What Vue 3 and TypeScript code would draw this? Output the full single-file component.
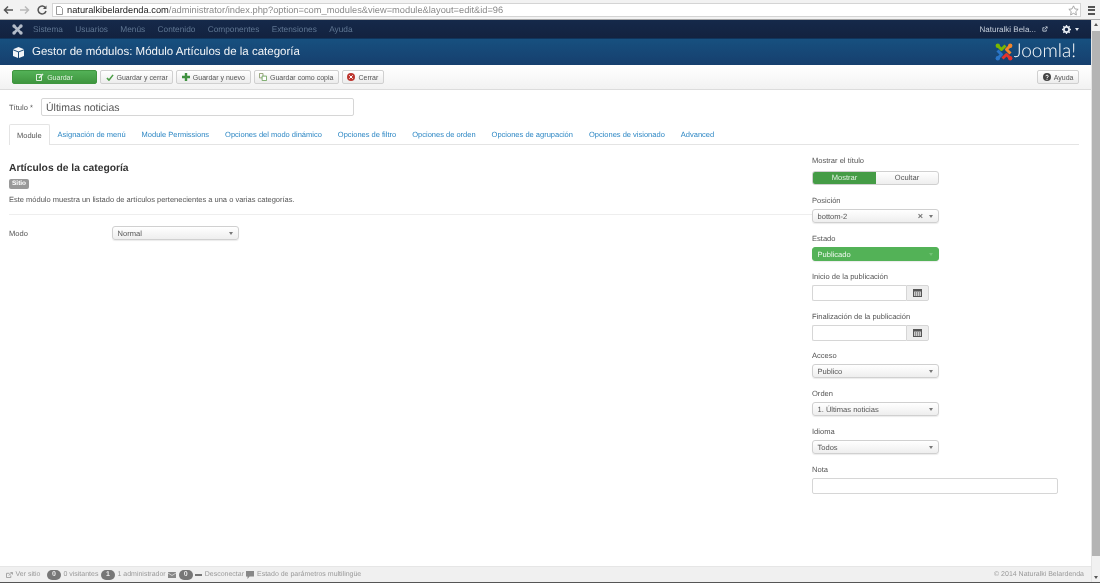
<script setup lang="ts">
const navItems = ['Sistema', 'Usuarios', 'Menús', 'Contenido', 'Componentes', 'Extensiones', 'Ayuda']
const tabs = [
  'Module',
  'Asignación de menú',
  'Module Permissions',
  'Opciones del modo dinámico',
  'Opciones de filtro',
  'Opciones de orden',
  'Opciones de agrupación',
  'Opciones de visionado',
  'Advanced',
]
</script>

<template>
  <div class="window">
    <div class="chrome">
      <svg width="10" height="10" viewBox="0 0 10 10"><path d="M10 5H2M5 1.500 1.500 5 5 8.500" fill="none" stroke="#555" stroke-width="1.500" /></svg>
      <svg width="10" height="10" viewBox="0 0 10 10"><path d="M0 5h8M5 1.500 8.500 5 5 8.500" fill="none" stroke="#b9b9b9" stroke-width="1.500" /></svg>
      <svg width="10" height="10" viewBox="0 0 10 10"><path d="M8.500 2.800A4 4 0 1 0 9 6" fill="none" stroke="#555" stroke-width="1.500" /><path d="M9.500.5v3.600H5.900z" fill="#555" /></svg>
      <div class="omnibox">
        <svg width="7" height="9" viewBox="0 0 7 9"><path d="M.5.5h4l2 2v6h-6z" fill="#fff" stroke="#999" /></svg>
        <span class="url"><b>naturalkibelardenda.com</b>/administrator/index.php?option=com_modules&amp;view=module&amp;layout=edit&amp;id=96</span>
        <svg class="star" width="11" height="11" viewBox="0 0 13 13"><path d="m6.500 1 1.700 3.600 3.800.5-2.800 2.700.7 3.900-3.400-1.900-3.400 1.900.7-3.900L1 5.100l3.800-.5z" fill="#fff" stroke="#999" /></svg>
      </div>
      <div class="burger"><i></i><i></i><i></i></div>
    </div>

    <div class="viewport">
      <div class="page">
        <nav class="navbar">
          <svg class="brand" width="11" height="11" viewBox="0 0 11 11"><path d="M2 2 9 9M9 2 2 9" stroke="#b4bcc9" stroke-width="2.600" /><circle cx="2" cy="2" r="1.700" fill="#b4bcc9" /><circle cx="9" cy="2" r="1.700" fill="#b4bcc9" /><circle cx="2" cy="9" r="1.700" fill="#b4bcc9" /><circle cx="9" cy="9" r="1.700" fill="#b4bcc9" /></svg>
          <span v-for="item in navItems" :key="item" class="nav-item">{{ item }}</span>
          <span class="nav-user">Naturalki Bela...
            <svg width="6" height="6" viewBox="0 0 7 7"><path d="M5 4v2H1V2h2M3 4l3-3M4 1h2v2" fill="none" stroke="#c6cfdb" /></svg>
          </span>
          <svg class="gear" width="9" height="9" viewBox="0 0 10 10"><circle cx="5" cy="5" r="2.900" fill="none" stroke="#e6ebf2" stroke-width="2" /><path d="M5 0v2M5 8v2M0 5h2M8 5h2M1.500 1.500l1.400 1.400M7.100 7.100l1.400 1.400M8.500 1.500 7.100 2.900M2.900 7.100 1.500 8.500" stroke="#e6ebf2" stroke-width="1.500" /></svg>
          <i class="caret light"></i>
        </nav>

        <header class="subhead">
          <svg width="11" height="11" viewBox="0 0 11 11"><path d="M5.500 0 11 2.200 5.500 4.400 0 2.200zM0 3.300l5 2v5.700L0 9zM11 3.300l-5 2v5.700l5-2z" fill="#f2f4f7" /></svg>
          <h1>Gestor de módulos: Módulo Artículos de la categoría</h1>
          <div class="joomla">
            <svg width="18" height="18" viewBox="0 0 18 18" fill="none" stroke-width="3" stroke-linejoin="round">
              <path d="M3 3 6.500 6.500 10.500 2.500" stroke="#7ab800" />
              <path d="M15 3 11.500 6.500 15.500 10.500" stroke="#f4862a" />
              <path d="M15 15 11.500 11.500 7.500 15.500" stroke="#e4322b" />
              <path d="M3 15 6.500 11.500 2.500 7.500" stroke="#2a75c7" />
              <circle cx="2.800" cy="2.800" r="2.200" fill="#7ab800" />
              <circle cx="15.200" cy="2.800" r="2.200" fill="#f4862a" />
              <circle cx="15.200" cy="15.200" r="2.200" fill="#e4322b" />
              <circle cx="2.800" cy="15.200" r="2.200" fill="#2a75c7" />
            </svg>
            <span>Joomla!</span>
          </div>
        </header>

        <div class="toolbar">
          <button class="btn primary">
            <svg width="8" height="8" viewBox="0 0 8 8"><path d="M.5 1.500h5v6h-5z" fill="none" stroke="#dff0df" /><path d="M3 5 7 1" stroke="#dff0df" stroke-width="1.500" /></svg>
            Guardar
          </button>
          <button class="btn">
            <svg width="8" height="7" viewBox="0 0 9 8"><path d="M1 4.500 3.300 7 8 1" fill="none" stroke="#4a9d45" stroke-width="1.800" /></svg>
            Guardar y cerrar
          </button>
          <button class="btn">
            <svg width="8" height="8" viewBox="0 0 8 8"><path d="M4 0v8M0 4h8" stroke="#3f9140" stroke-width="2.400" /></svg>
            Guardar y nuevo
          </button>
          <button class="btn">
            <svg width="8" height="8" viewBox="0 0 9 9"><path d="M.5.5h4v5h-4z" fill="none" stroke="#8a9a6a" /><path d="M3.500 3.500h5v5h-5z" fill="#fff" stroke="#6da35d" /></svg>
            Guardar como copia
          </button>
          <button class="btn">
            <svg width="8" height="8" viewBox="0 0 8 8"><circle cx="4" cy="4" r="4" fill="#bd362f" /><path d="m2.300 2.300 3.400 3.400m0-3.400L2.300 5.700" stroke="#fff" /></svg>
            Cerrar
          </button>
          <button class="btn help">
            <svg width="8" height="8" viewBox="0 0 8 8"><circle cx="4" cy="4" r="4" fill="#444" /><path d="M2.800 3.200c0-1.400 2.500-1.400 2.500 0C5.300 4 4 4 4 5" fill="none" stroke="#fff" /><path d="M3.500 5.700h1v1h-1z" fill="#fff" /></svg>
            Ayuda
          </button>
        </div>

        <main class="content">
          <div class="title-row">
            <label>Título *</label>
            <div class="title-input">Últimas noticias</div>
          </div>

          <ul class="tabs">
            <li v-for="(tab, i) in tabs" :key="tab" :class="{ active: i === 0 }">{{ tab }}</li>
          </ul>

          <div class="columns">
            <section class="left">
              <h2>Artículos de la categoría</h2>
              <span class="badge">Sitio</span>
              <p class="desc">Este módulo muestra un listado de artículos pertenecientes a una o varias categorías.</p>
              <hr />
              <div class="mode-row">
                <label>Modo</label>
                <div class="select"><span>Normal</span><i class="caret"></i></div>
              </div>
            </section>

            <aside class="side">
              <label>Mostrar el título</label>
              <div class="toggle"><span class="on">Mostrar</span><span>Ocultar</span></div>

              <label>Posición</label>
              <div class="select"><span>bottom-2</span><em>×</em><i class="caret"></i></div>

              <label>Estado</label>
              <div class="select published"><span>Publicado</span><i class="caret"></i></div>

              <label>Inicio de la publicación</label>
              <div class="date">
                <div class="date-input"></div>
                <div class="date-btn">
                  <svg width="9" height="8" viewBox="0 0 9 8"><path d="M0 0h9v8H0z" fill="#555" /><path d="M1 2.500h7v4.500H1z" fill="#ccc" /><path d="M2 3.500h1v1H2zM4 3.500h1v1H4zM6 3.500h1v1H6zM2 5.500h1v1H2zM4 5.500h1v1H4zM6 5.500h1v1H6z" fill="#555" /></svg>
                </div>
              </div>

              <label>Finalización de la publicación</label>
              <div class="date">
                <div class="date-input"></div>
                <div class="date-btn">
                  <svg width="9" height="8" viewBox="0 0 9 8"><path d="M0 0h9v8H0z" fill="#555" /><path d="M1 2.500h7v4.500H1z" fill="#ccc" /><path d="M2 3.500h1v1H2zM4 3.500h1v1H4zM6 3.500h1v1H6zM2 5.500h1v1H2zM4 5.500h1v1H4zM6 5.500h1v1H6z" fill="#555" /></svg>
                </div>
              </div>

              <label>Acceso</label>
              <div class="select"><span>Publico</span><i class="caret"></i></div>

              <label>Orden</label>
              <div class="select"><span>1. Últimas noticias</span><i class="caret"></i></div>

              <label>Idioma</label>
              <div class="select"><span>Todos</span><i class="caret"></i></div>

              <label>Nota</label>
              <div class="note"></div>
            </aside>
          </div>
        </main>

        <footer class="status">
          <svg width="7" height="6" viewBox="0 0 8 7"><path d="M4 1.500H.5v5h5V4M3 4l4-3M5 .5h2.500V3" fill="none" stroke="#999" /></svg>
          <span class="view-site">Ver sitio</span>
          <b class="count">0</b><span>0 visitantes</span>
          <b class="count">1</b><span>1 administrador</span>
          <svg width="8" height="6" viewBox="0 0 8 6"><path d="M0 0h8v6H0z" fill="#888" /><path d="m0 1 4 2.500L8 1" fill="none" stroke="#eee" stroke-width=".7" /></svg>
          <b class="count">0</b>
          <i class="dash"></i><span>Desconectar</span>
          <svg width="8" height="8" viewBox="0 0 8 8"><path d="M0 0h8v5.500H3.500L1.500 8V5.500H0z" fill="#888" /></svg>
          <span>Estado de parámetros multilingüe</span>
          <span class="copyright">© 2014 Naturalki Belardenda</span>
        </footer>
      </div>

      <div class="scrollbar">
        <i class="arrow up"></i>
        <div class="thumb"></div>
        <i class="arrow down"></i>
      </div>
    </div>
    <div class="edge"></div>
  </div>
</template>

<style>
html,
body {
  margin: 0;
  overflow: hidden;
}
</style>

<style scoped>
.window {
  width: 1100px;
  height: 583px;
  display: flex;
  flex-direction: column;
  font-family: 'Liberation Sans', Arial, sans-serif;
  font-size: 7.550px;
  color: #555;
  background: #fff;
  text-rendering: geometricPrecision;
  filter: blur(0.3px);
}

.chrome {
  height: 20px;
  flex: none;
  display: flex;
  align-items: center;
  padding: 1px 0 0 3px;
  gap: 7px;
  background: #f2f2f2;
  box-sizing: border-box;
  border-bottom: 1px solid #a9a9a9;
}
.chrome > svg {
  flex: none;
}
.omnibox {
  width: 1029px;
  height: 14px;
  margin-left: -2px;
  box-sizing: border-box;
  display: flex;
  align-items: center;
  gap: 4px;
  padding: 0 1px 0 3px;
  background: #fff;
  border: 1px solid #d4d4d4;
}
.url {
  font-size: 9.300px;
  color: #8a8a8a;
  white-space: nowrap;
}
.url b {
  font-weight: 400;
  color: #222;
}
.star {
  margin-left: auto;
}
.burger {
  width: 7px;
  display: flex;
  flex-direction: column;
  gap: 1.500px;
}
.burger i {
  height: 2px;
  background: #555;
}

.viewport {
  flex: 1;
  min-height: 0;
  display: flex;
}
.page {
  flex: 1;
  min-width: 0;
  display: flex;
  flex-direction: column;
}

.navbar {
  height: 18px;
  flex: none;
  display: flex;
  align-items: center;
  padding: 0 12px;
  background: linear-gradient(#15294a, #13223f);
  color: #5f7692;
  box-sizing: border-box;
}
.brand {
  margin-right: 10px;
}
.nav-item {
  font-size: 8.300px;
  margin-right: 12.300px;
}
.nav-user {
  margin-left: auto;
  color: #c6cfdb;
  font-size: 8px;
  display: flex;
  align-items: center;
  gap: 6px;
}
.gear {
  margin-left: 14px;
}
.caret {
  width: 0;
  height: 0;
  border-left: 2.500px solid transparent;
  border-right: 2.500px solid transparent;
  border-top: 3px solid #777;
}
.caret.light {
  margin-left: 4px;
  border-top-color: #dfe5ee;
}

.subhead {
  height: 27px;
  flex: none;
  display: flex;
  align-items: center;
  padding: 0 15px 0 13px;
  gap: 8px;
  background: linear-gradient(#17507f, #163f6e);
  border-top: 1px solid #10345c;
  box-sizing: border-box;
  color: #f2f4f7;
}
.subhead h1 {
  margin: 0;
  font-size: 11.500px;
  font-weight: 400;
}
.joomla {
  margin-left: auto;
  display: flex;
  align-items: center;
  gap: 1px;
}
.joomla span {
  font-family: Lato, sans-serif;
  font-weight: 300;
  font-size: 19px;
  line-height: 20px;
  margin-top: -3px;
  color: #fff;
}

.toolbar {
  height: 25px;
  flex: none;
  display: flex;
  align-items: center;
  gap: 3px;
  padding: 0 12px;
  background: linear-gradient(#fff, #f2f2f2);
  border-bottom: 1px solid #dcdcdc;
  box-sizing: border-box;
}
.btn {
  height: 14px;
  padding: 0 4.500px;
  display: inline-flex;
  align-items: center;
  justify-content: center;
  gap: 3px;
  font: 7px 'Liberation Sans', Arial, sans-serif;
  color: #555;
  background: linear-gradient(#fff, #ececec);
  border: 1px solid #d0d0d0;
  border-radius: 2px;
  box-sizing: border-box;
  white-space: nowrap;
}
.btn.primary {
  width: 85px;
  color: #dff0df;
  background: linear-gradient(#53b157, #3f963f);
  border-color: #3f963f;
}
.btn.help {
  margin-left: auto;
}

.content {
  flex: 1;
  padding: 8px 12px 0 9px;
  min-height: 0;
}
.title-row {
  display: flex;
  align-items: center;
}
.title-row label {
  width: 32px;
  padding-top: 1px;
}
.title-input {
  width: 313px;
  height: 18px;
  box-sizing: border-box;
  padding: 1px 4px 0;
  display: flex;
  align-items: center;
  font-size: 10.500px;
  color: #555;
  border: 1px solid #d6d6d6;
  border-radius: 2px;
}

.tabs {
  list-style: none;
  margin: 8px 0 0;
  padding: 0;
  height: 20px;
  display: flex;
  border-bottom: 1px solid #e4e4e4;
}
.tabs li {
  padding: 1px 8px 0;
  line-height: 20px;
  color: #2d87c4;
  font-size: 7.500px;
  white-space: nowrap;
}
.tabs li.active {
  color: #555;
  padding: 1px 7px 0;
  height: 21px;
  background: #fff;
  border: 1px solid #e4e4e4;
  border-bottom: 0;
  border-radius: 2px 2px 0 0;
  box-sizing: border-box;
}

.columns {
  display: flex;
  padding-top: 11px;
}
.left {
  width: 803px;
  flex: none;
  padding-top: 7px;
}
.left h2 {
  margin: 0;
  font-size: 10.300px;
  line-height: 12px;
  color: #333;
}
.badge {
  display: inline-block;
  margin-top: 4px;
  padding: 0 3px;
  height: 10px;
  line-height: 10px;
  font-size: 6.500px;
  font-weight: 700;
  color: #fff;
  background: #999;
  border-radius: 2px;
}
.desc {
  margin: 6px 0 0;
  font-size: 7.500px;
  line-height: 10px;
}
hr {
  margin: 9px 0 0;
  border: 0;
  border-top: 1px solid #eee;
}
.mode-row {
  margin-top: 11px;
  display: flex;
  align-items: center;
}
.mode-row label {
  width: 103px;
}
.mode-row .select {
  margin: 0;
}

.side {
  width: 246px;
  flex: none;
  display: flex;
  flex-direction: column;
}
.side label {
  line-height: 10px;
}
.select {
  width: 127px;
  height: 14px;
  flex: none;
  box-sizing: border-box;
  display: flex;
  align-items: center;
  gap: 6px;
  padding: 0 5px 0 4.500px;
  margin: 3px 0 11px;
  border: 1px solid #d0d0d0;
  border-radius: 3px;
  background: linear-gradient(#fff, #eee);
  box-shadow: 0 1px 1px rgba(0, 0, 0, 0.08);
  font-size: 7.550px;
  color: #555;
}
.select span {
  flex: 1;
}
.select em {
  font-style: normal;
  font-weight: 700;
  font-size: 9px;
  line-height: 8px;
  color: #777;
}
.select.published {
  background: #53b257;
  border-color: #53b257;
  color: #f0f8f0;
}
.select.published .caret {
  border-top-color: #74c277;
}
.toggle {
  width: 127px;
  height: 14px;
  flex: none;
  display: flex;
  margin: 5px 0 11px;
  box-sizing: border-box;
  border: 1px solid #d0d0d0;
  border-radius: 3px;
  overflow: hidden;
  background: linear-gradient(#fff, #eee);
}
.toggle span {
  flex: 1;
  text-align: center;
  line-height: 12px;
}
.toggle .on {
  flex: none;
  width: 63px;
  background: #459c46;
  color: #e4f2e4;
}
.date {
  display: flex;
  flex: none;
  margin: 3px 0 10.500px;
  height: 16px;
}
.date-input {
  width: 94px;
  box-sizing: border-box;
  border: 1px solid #d6d6d6;
  border-right: 0;
  border-radius: 2px 0 0 2px;
}
.date-btn {
  width: 23px;
  box-sizing: border-box;
  display: flex;
  align-items: center;
  justify-content: center;
  background: #eee;
  border: 1px solid #d6d6d6;
  border-radius: 0 2px 2px 0;
}
.note {
  width: 246px;
  height: 16px;
  flex: none;
  margin-top: 3px;
  box-sizing: border-box;
  border: 1px solid #d6d6d6;
  border-radius: 2px;
}

.status {
  height: 16px;
  flex: none;
  display: flex;
  align-items: center;
  gap: 2.500px;
  padding: 0 7px 0 6px;
  background: #f0f0f0;
  border-top: 1px solid #e6e6e6;
  box-sizing: border-box;
  color: #999;
  font-size: 7px;
}
.view-site {
  margin-right: 4px;
}
.count {
  width: 14px;
  height: 10px;
  line-height: 10px;
  text-align: center;
  border-radius: 5px;
  background: #777;
  color: #eee;
  font-size: 7px;
}
.dash {
  width: 7px;
  height: 2px;
  background: #777;
}
.copyright {
  margin-left: auto;
}

.scrollbar {
  width: 9px;
  flex: none;
  display: flex;
  flex-direction: column;
  align-items: center;
  background: #f1f1f1;
  border-left: 1px solid #e4e4e4;
  box-sizing: border-box;
}
.arrow {
  width: 0;
  height: 0;
  border-left: 2.500px solid transparent;
  border-right: 2.500px solid transparent;
  flex: none;
}
.arrow.up {
  margin: 3px 0 5px;
  border-bottom: 3px solid #555;
}
.arrow.down {
  margin: 20px 0 3px;
  border-top: 3px solid #555;
}
.thumb {
  width: 100%;
  flex: 1;
  background: #b4b4b4;
}
.edge {
  height: 1px;
  flex: none;
  background: #555;
}
</style>
